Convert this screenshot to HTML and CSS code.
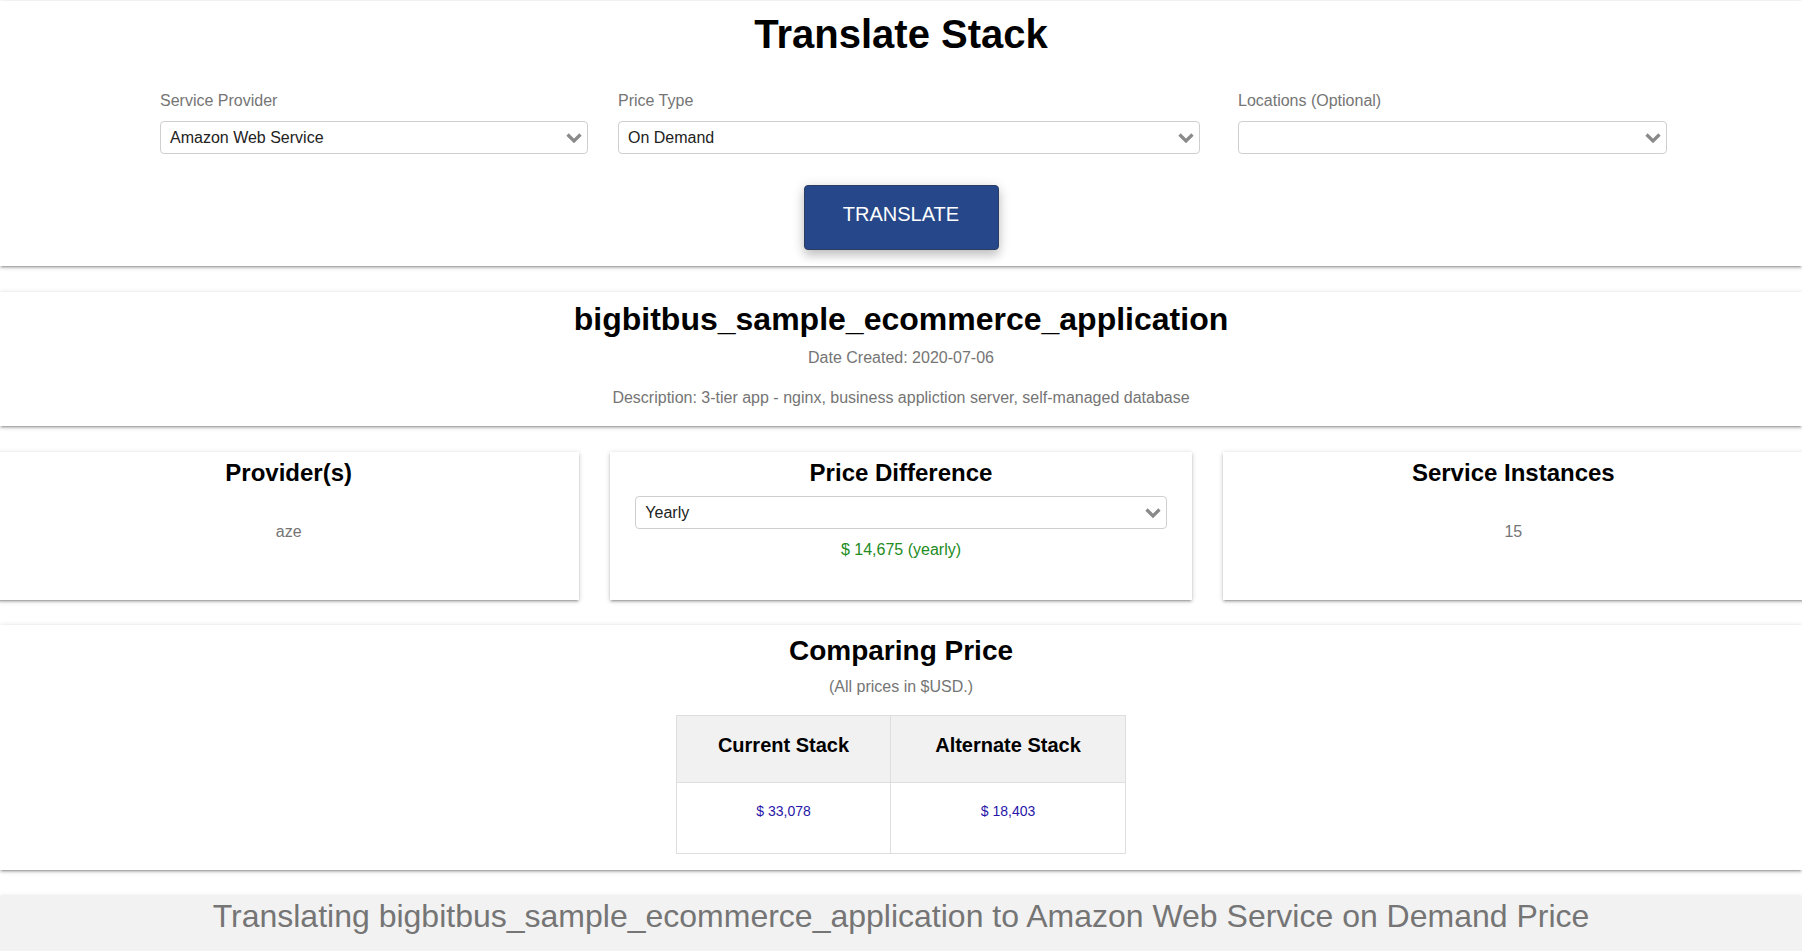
FILE: index.html
```html
<!DOCTYPE html>
<html lang="en">
<head>
<meta charset="utf-8">
<title>Translate Stack</title>
<link rel="stylesheet" href="styles.css">
</head>
<body>
<div class="page">
  <section class="card card-form">
    <h1 class="page-title">Translate Stack</h1>
    <div class="form-row">
      <div class="field">
        <label class="field-label">Service Provider</label>
        <div class="select">
          <span class="select-value">Amazon Web Service</span>
          <svg class="chevron" width="16" height="10" viewBox="0 0 16 10"><polyline points="1.5,1.5 8,8 14.5,1.5" fill="none" stroke="#8a8a8a" stroke-width="3.2"/></svg>
        </div>
      </div>
      <div class="field field-wide">
        <label class="field-label">Price Type</label>
        <div class="select">
          <span class="select-value">On Demand</span>
          <svg class="chevron" width="16" height="10" viewBox="0 0 16 10"><polyline points="1.5,1.5 8,8 14.5,1.5" fill="none" stroke="#8a8a8a" stroke-width="3.2"/></svg>
        </div>
      </div>
      <div class="field">
        <label class="field-label">Locations (Optional)</label>
        <div class="select">
          <span class="select-value"></span>
          <svg class="chevron" width="16" height="10" viewBox="0 0 16 10"><polyline points="1.5,1.5 8,8 14.5,1.5" fill="none" stroke="#8a8a8a" stroke-width="3.2"/></svg>
        </div>
      </div>
    </div>
    <div class="actions">
      <button class="btn-translate" type="button">TRANSLATE</button>
    </div>
  </section>

  <section class="card card-stack">
    <h2 class="stack-name">bigbitbus_sample_ecommerce_application</h2>
    <p class="stack-meta">Date Created: 2020-07-06</p>
    <p class="stack-meta stack-desc">Description: 3-tier app - nginx, business appliction server, self-managed database</p>
  </section>

  <div class="summary-row">
    <section class="card summary-card">
      <h3 class="summary-title">Provider(s)</h3>
      <p class="summary-value">aze</p>
    </section>
    <section class="card summary-card">
      <h3 class="summary-title">Price Difference</h3>
      <div class="select select-period">
        <span class="select-value">Yearly</span>
        <svg class="chevron" width="16" height="10" viewBox="0 0 16 10"><polyline points="1.5,1.5 8,8 14.5,1.5" fill="none" stroke="#8a8a8a" stroke-width="3.2"/></svg>
      </div>
      <p class="price-diff">$ 14,675 (yearly)</p>
    </section>
    <section class="card summary-card">
      <h3 class="summary-title">Service Instances</h3>
      <p class="summary-value">15</p>
    </section>
  </div>

  <section class="card card-compare">
    <h3 class="compare-title">Comparing Price</h3>
    <p class="compare-note">(All prices in $USD.)</p>
    <table class="compare-table">
      <colgroup><col class="col-current"><col class="col-alt"></colgroup>
      <thead>
        <tr><th>Current Stack</th><th>Alternate Stack</th></tr>
      </thead>
      <tbody>
        <tr><td>$ 33,078</td><td>$ 18,403</td></tr>
      </tbody>
    </table>
  </section>

  <div class="footer-bar">Translating bigbitbus_sample_ecommerce_application to Amazon Web Service on Demand Price</div>
</div>
</body>
</html>
```

FILE: styles.css
```css
html, body {
  margin: 0;
  padding: 0;
  background: #ffffff;
}

body {
  font-family: "Liberation Sans", Arial, Helvetica, sans-serif;
  color: #000;
  overflow-x: hidden;
}

.page {
  display: flex;
  flex-direction: column;
  padding-top: 1px;
}

.card {
  background: #fff;
  box-shadow: 0 2px 2px 0 rgba(0, 0, 0, 0.14),
              0 3px 1px -2px rgba(0, 0, 0, 0.12),
              0 1px 5px 0 rgba(0, 0, 0, 0.2);
}

/* ---------- form card ---------- */
.card-form {
  padding: 9px 0 16px;
}

.page-title {
  margin: 0;
  font-size: 40px;
  line-height: 48px;
  font-weight: 700;
  text-align: center;
}

.form-row {
  display: grid;
  grid-template-columns: 428px 590px 429px;
  column-gap: 30px;
  margin-top: 32.5px;
  padding-left: 160px;
}

.field-label {
  display: block;
  font-size: 16px;
  line-height: 20px;
  color: #757575;
  margin-bottom: 10.5px;
}

.field-wide .select {
  width: 582px;
}

.select {
  box-sizing: border-box;
  height: 33px;
  border: 1px solid #cfcfcf;
  border-radius: 4px;
  background: #fff;
  display: flex;
  align-items: center;
  justify-content: space-between;
  padding: 0 5px 0 9px;
  font-size: 16px;
  line-height: 20px;
  color: #222;
}

.chevron {
  flex: none;
  display: block;
}

.actions {
  display: flex;
  justify-content: center;
  margin-top: 31px;
}

.btn-translate {
  box-sizing: border-box;
  width: 195px;
  height: 65px;
  padding: 0 0 6px;
  border: 1px solid #2a3d63;
  border-radius: 4px;
  background: #264789;
  color: #fff;
  font-family: "Liberation Sans", Arial, sans-serif;
  font-size: 20px;
  line-height: 57px;
  text-align: center;
  box-shadow: 0 6px 10px 0 rgba(0, 0, 0, 0.16),
              0 2px 14px 0 rgba(0, 0, 0, 0.14);
  cursor: pointer;
}

/* ---------- stack card ---------- */
.card-stack {
  margin-top: 26px;
  padding: 7.2px 0 17.8px;
  text-align: center;
}

.stack-name {
  margin: 0;
  font-size: 32px;
  line-height: 40px;
  font-weight: 700;
}

.stack-meta {
  margin: 8.6px 0 0;
  font-size: 16px;
  line-height: 20px;
  color: #757575;
}

.stack-desc {
  margin-top: 20.4px;
}

/* ---------- summary row ---------- */
.summary-row {
  display: grid;
  grid-template-columns: repeat(3, 1fr);
  column-gap: 31px;
  margin: 26px -2px 0;
}

.summary-card {
  box-sizing: border-box;
  height: 148px;
  padding-top: 6.4px;
  text-align: center;
}

.summary-title {
  margin: 0;
  font-size: 24px;
  line-height: 30px;
  font-weight: 700;
}

.summary-value {
  margin: 33.8px 0 0;
  font-size: 16px;
  line-height: 20px;
  color: #757575;
}

.select-period {
  margin: 8px 25px 0;
  text-align: left;
}

.price-diff {
  margin: 11px 0 0;
  font-size: 16px;
  line-height: 20px;
  color: #228b22;
}

/* ---------- compare card ---------- */
.card-compare {
  margin-top: 25px;
  padding: 8.6px 0 15.7px;
  text-align: center;
}

.compare-title {
  margin: 0;
  font-size: 28px;
  line-height: 34px;
  font-weight: 700;
}

.compare-note {
  margin: 9.6px 0 0;
  font-size: 16px;
  line-height: 20px;
  color: #757575;
}

.compare-table {
  margin: 18.1px auto 0;
  border-collapse: collapse;
  table-layout: fixed;
  width: 449px;
}

.col-current { width: 214px; }
.col-alt { width: 235px; }

.compare-table th {
  background: #f1f1f1;
  border: 1px solid #dedede;
  padding: 17px 0 25px;
  font-size: 20px;
  line-height: 24px;
  font-weight: 700;
  color: #000;
}

.compare-table td {
  border: 1px solid #dedede;
  padding: 19px 0 33px;
  font-size: 14px;
  line-height: 18px;
  color: #2816a8;
}

/* ---------- footer bar ---------- */
.footer-bar {
  margin-top: 26px;
  padding: 0 0 15px;
  background: #f2f2f2;
  text-align: center;
  font-size: 32px;
  line-height: 40px;
  color: #757575;
  box-shadow: 0 2px 2px 0 rgba(0, 0, 0, 0.14),
              0 3px 1px -2px rgba(0, 0, 0, 0.12),
              0 1px 5px 0 rgba(0, 0, 0, 0.2);
}
```
